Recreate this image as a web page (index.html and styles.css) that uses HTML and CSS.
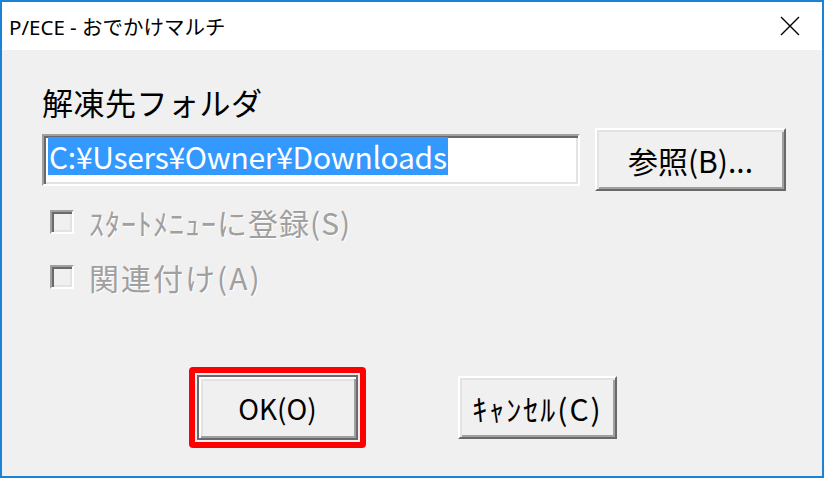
FILE: index.html
```html
<!DOCTYPE html>
<html lang="ja">
<head>
<meta charset="UTF-8">
<meta name="viewport" content="width=device-width, initial-scale=1.0">
<title>P/ECE - おでかけマルチ</title>
<link rel="stylesheet" href="styles.css">
</head>
<body>

<div class="window">
    <div class="titlebar">
        <span class="title">P/ECE - おでかけマルチ</span>
        <svg class="close" width="20" height="20" viewBox="0 0 20 20">
            <path d="M1 1L19 19M19 1L1 19" stroke="#000" stroke-width="1.4" fill="none"/>
        </svg>
    </div>

    <div class="content">
        <div class="label">解凍先フォルダ</div>

        <div class="path-row">
            <div class="path-box"><span class="selected">C:¥Users¥Owner¥Downloads</span></div>
            <button class="btn browse">参照(B)...</button>
        </div>

        <div class="options">
            <label class="check"><span class="box"></span><span class="check-text">ｽﾀｰﾄﾒﾆｭｰに登録(S)</span></label>
            <label class="check"><span class="box"></span><span class="check-text wide">関連付け(A)</span></label>
        </div>

        <div class="actions">
            <span class="mark"><button class="btn ok">OK(O)</button></span>
            <button class="btn cancel">ｷｬﾝｾﾙ(C)</button>
        </div>
    </div>
</div>

</body>
</html>
```

FILE: styles.css
```css
html, body {
    margin: 0;
    padding: 0;
}
body {
    width: 824px;
    height: 478px;
    overflow: hidden;
    background-color: #f0f0f0;
    font-family: "Noto Sans CJK JP", sans-serif;
}
.window {
    box-sizing: border-box;
    width: 824px;
    height: 478px;
    border: 2px solid #1883d7;
    background-color: #f0f0f0;
    display: flex;
    flex-direction: column;
}
.titlebar {
    height: 48px;
    background-color: #fff;
    display: flex;
    align-items: center;
    justify-content: space-between;
    padding: 0 22px 0 7px;
    flex-shrink: 0;
}
.title {
    font-family: "Noto Sans", "Noto Sans CJK JP", sans-serif;
    font-size: 20.5px;
    color: #000;
}
.content {
    padding: 34px 0 0 40px;
}
.label {
    font-size: 31px;
    line-height: 36px;
    letter-spacing: 0.5px;
    color: #000;
}
.path-row {
    display: flex;
    align-items: center;
    gap: 15px;
    height: 63px;
    margin-top: 8px;
}
.path-box {
    box-sizing: border-box;
    width: 538px;
    height: 52px;
    padding: 1px 0 0 2px;
    background-color: #fff;
    border: 2px solid;
    border-color: #a0a0a0 #fff #fff #a0a0a0;
    box-shadow: inset 2px 2px #696969, inset -2px -2px #e3e3e3;
}
.selected {
    display: inline-block;
    margin: 0 0 0 2px;
    padding: 0 1px;
    background-color: #3399ff;
    color: #fff;
    font-size: 30px;
    line-height: 38px;
    letter-spacing: -0.3px;
}
.btn {
    box-sizing: border-box;
    padding: 0;
    font-family: "Noto Sans CJK JP", sans-serif;
    font-size: 28px;
    color: #000;
    background-color: #f0f0f0;
    border: 2px solid;
    border-color: #fff #696969 #696969 #fff;
    box-shadow: inset 2px 2px #e3e3e3, inset -2px -2px #a0a0a0;
}
.browse {
    width: 191px;
    height: 63px;
    font-size: 30px;
}
.options {
    margin-top: 11px;
}
.check {
    display: flex;
    align-items: center;
    height: 40px;
    margin-bottom: 15px;
}
.check:last-child {
    margin-bottom: 0;
}
.box {
    box-sizing: border-box;
    width: 24px;
    height: 24px;
    margin-left: 8px;
    background-color: #f0f0f0;
    border: 2px solid;
    border-color: #a0a0a0 #fff #fff #a0a0a0;
    box-shadow: inset 2px 2px #696969, inset -2px -2px #e3e3e3;
}
.check-text {
    margin-left: 15px;
    font-size: 30px;
    letter-spacing: 1px;
    color: #a0a0a0;
    text-shadow: 1px 1px 0 #fff;
}
.check-text.wide {
    letter-spacing: 2px;
}
.actions {
    display: flex;
    align-items: center;
    gap: 92px;
    margin-top: 70px;
    padding-left: 147px;
}
.mark {
    display: flex;
    padding: 2px;
    border: 6px solid #ff0000;
    border-radius: 4px;
}
.ok {
    width: 161px;
    height: 65px;
    border-color: #696969;
    box-shadow: inset 2px 2px #fff, inset -2px -2px #a0a0a0, inset 4px 4px #e3e3e3;
}
.cancel {
    width: 159px;
    height: 63px;
    font-size: 30px;
    letter-spacing: 2px;
}
```
